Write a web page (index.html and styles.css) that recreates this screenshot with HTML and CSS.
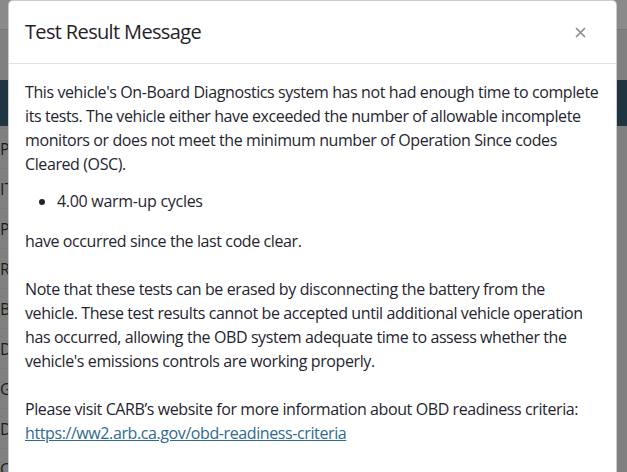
FILE: index.html
```html
<!DOCTYPE html>
<html lang="en">
<head>
<meta charset="utf-8">
<title>Test Result Message</title>
<link rel="stylesheet" href="styles.css">
</head>
<body>
<div class="page">
  <div class="topbar"></div>
  <div class="gap"></div>
  <div class="table-head"></div>
  <div class="rows">
    <div class="row">PPM</div>
    <div class="row">ITM</div>
    <div class="row">PPM</div>
    <div class="row">RPM</div>
    <div class="row">BCM</div>
    <div class="row">DTC</div>
    <div class="row">GEN</div>
    <div class="row">DTC</div>
    <div class="row">CHK</div>
  </div>
</div>

<div class="modal">
  <div class="modal-header">
    <h5 class="modal-title">Test Result Message</h5>
    <button class="close" type="button" aria-label="Close">
      <svg width="11" height="11" viewBox="0 0 11 11"><path d="M1 1L10 10M10 1L1 10" stroke="#8b8b8b" stroke-width="1.6" fill="none"/></svg>
    </button>
  </div>
  <div class="modal-body">
    <p class="intro">This vehicle's On-Board Diagnostics system has not had enough time to complete its tests. The vehicle either have exceeded the number of allowable incomplete monitors or does not meet the minimum number of Operation Since codes Cleared (OSC).</p>
    <ul class="cycles">
      <li>4.00 warm-up cycles</li>
    </ul>
    <p class="detail">have occurred since the last code clear.<br><br>Note that these tests can be erased by disconnecting the battery from the vehicle. These test results cannot be accepted until additional vehicle operation has occurred, allowing the OBD system adequate time to assess whether the vehicle's emissions controls are working properly.<br><br>Please visit CARB’s website for more information about OBD readiness criteria:<br><a href="#">https://ww2.arb.ca.gov/obd-readiness-criteria</a></p>
  </div>
</div>
</body>
</html>
```
FILE: styles.css
```css
html, body {
  margin: 0;
  padding: 0;
  height: 100%;
  overflow: hidden;
}

body {
  background: #808080;
  font-family: "Open Sans", "Noto Sans", sans-serif;
  color: #212529;
}

.page {
  display: flex;
  flex-direction: column;
}

.topbar {
  height: 29px;
  background: #8a8a8a;
  border-bottom: 1px solid #777;
}

.gap {
  height: 50px;
}

.table-head {
  height: 46px;
  background: #203542;
}

.rows {
  padding-top: 2px;
  width: 10px;
  overflow: hidden;
}

.row {
  height: 40px;
  line-height: 40px;
  font-size: 16px;
  color: #1c1c1c;
  white-space: nowrap;
  border-top: 1px solid #7a7a7a;
  box-sizing: border-box;
}

.modal {
  position: absolute;
  top: 0;
  left: 8px;
  width: 609px;
  background: #fff;
  border: 1px solid rgba(0, 0, 0, 0.2);
  border-radius: 5px;
  box-sizing: border-box;
  min-height: 480px;
}

.modal-header {
  display: flex;
  align-items: center;
  justify-content: space-between;
  padding: 16px;
  border-bottom: 1px solid #dee2e6;
}

.modal-title {
  margin: 0;
  font-size: 20px;
  line-height: 30px;
  font-weight: 400;
  color: #1f2328;
  letter-spacing: -0.65px;
}

.close {
  background: none;
  border: 0;
  padding: 0;
  margin-right: 14px;
  width: 11px;
  height: 11px;
  display: flex;
}

.modal-body {
  padding: 16px;
  font-size: 16px;
  line-height: 24px;
  color: #1f2430;
}

.modal-body p {
  margin: 0;
}

.intro,
.detail {
  letter-spacing: -0.4px;
}

.cycles {
  margin: 13px 0 16px 0;
  padding-left: 32px;
  letter-spacing: -0.3px;
}

.modal-body a {
  color: #2f6a8f;
  text-decoration: underline;
}
```
